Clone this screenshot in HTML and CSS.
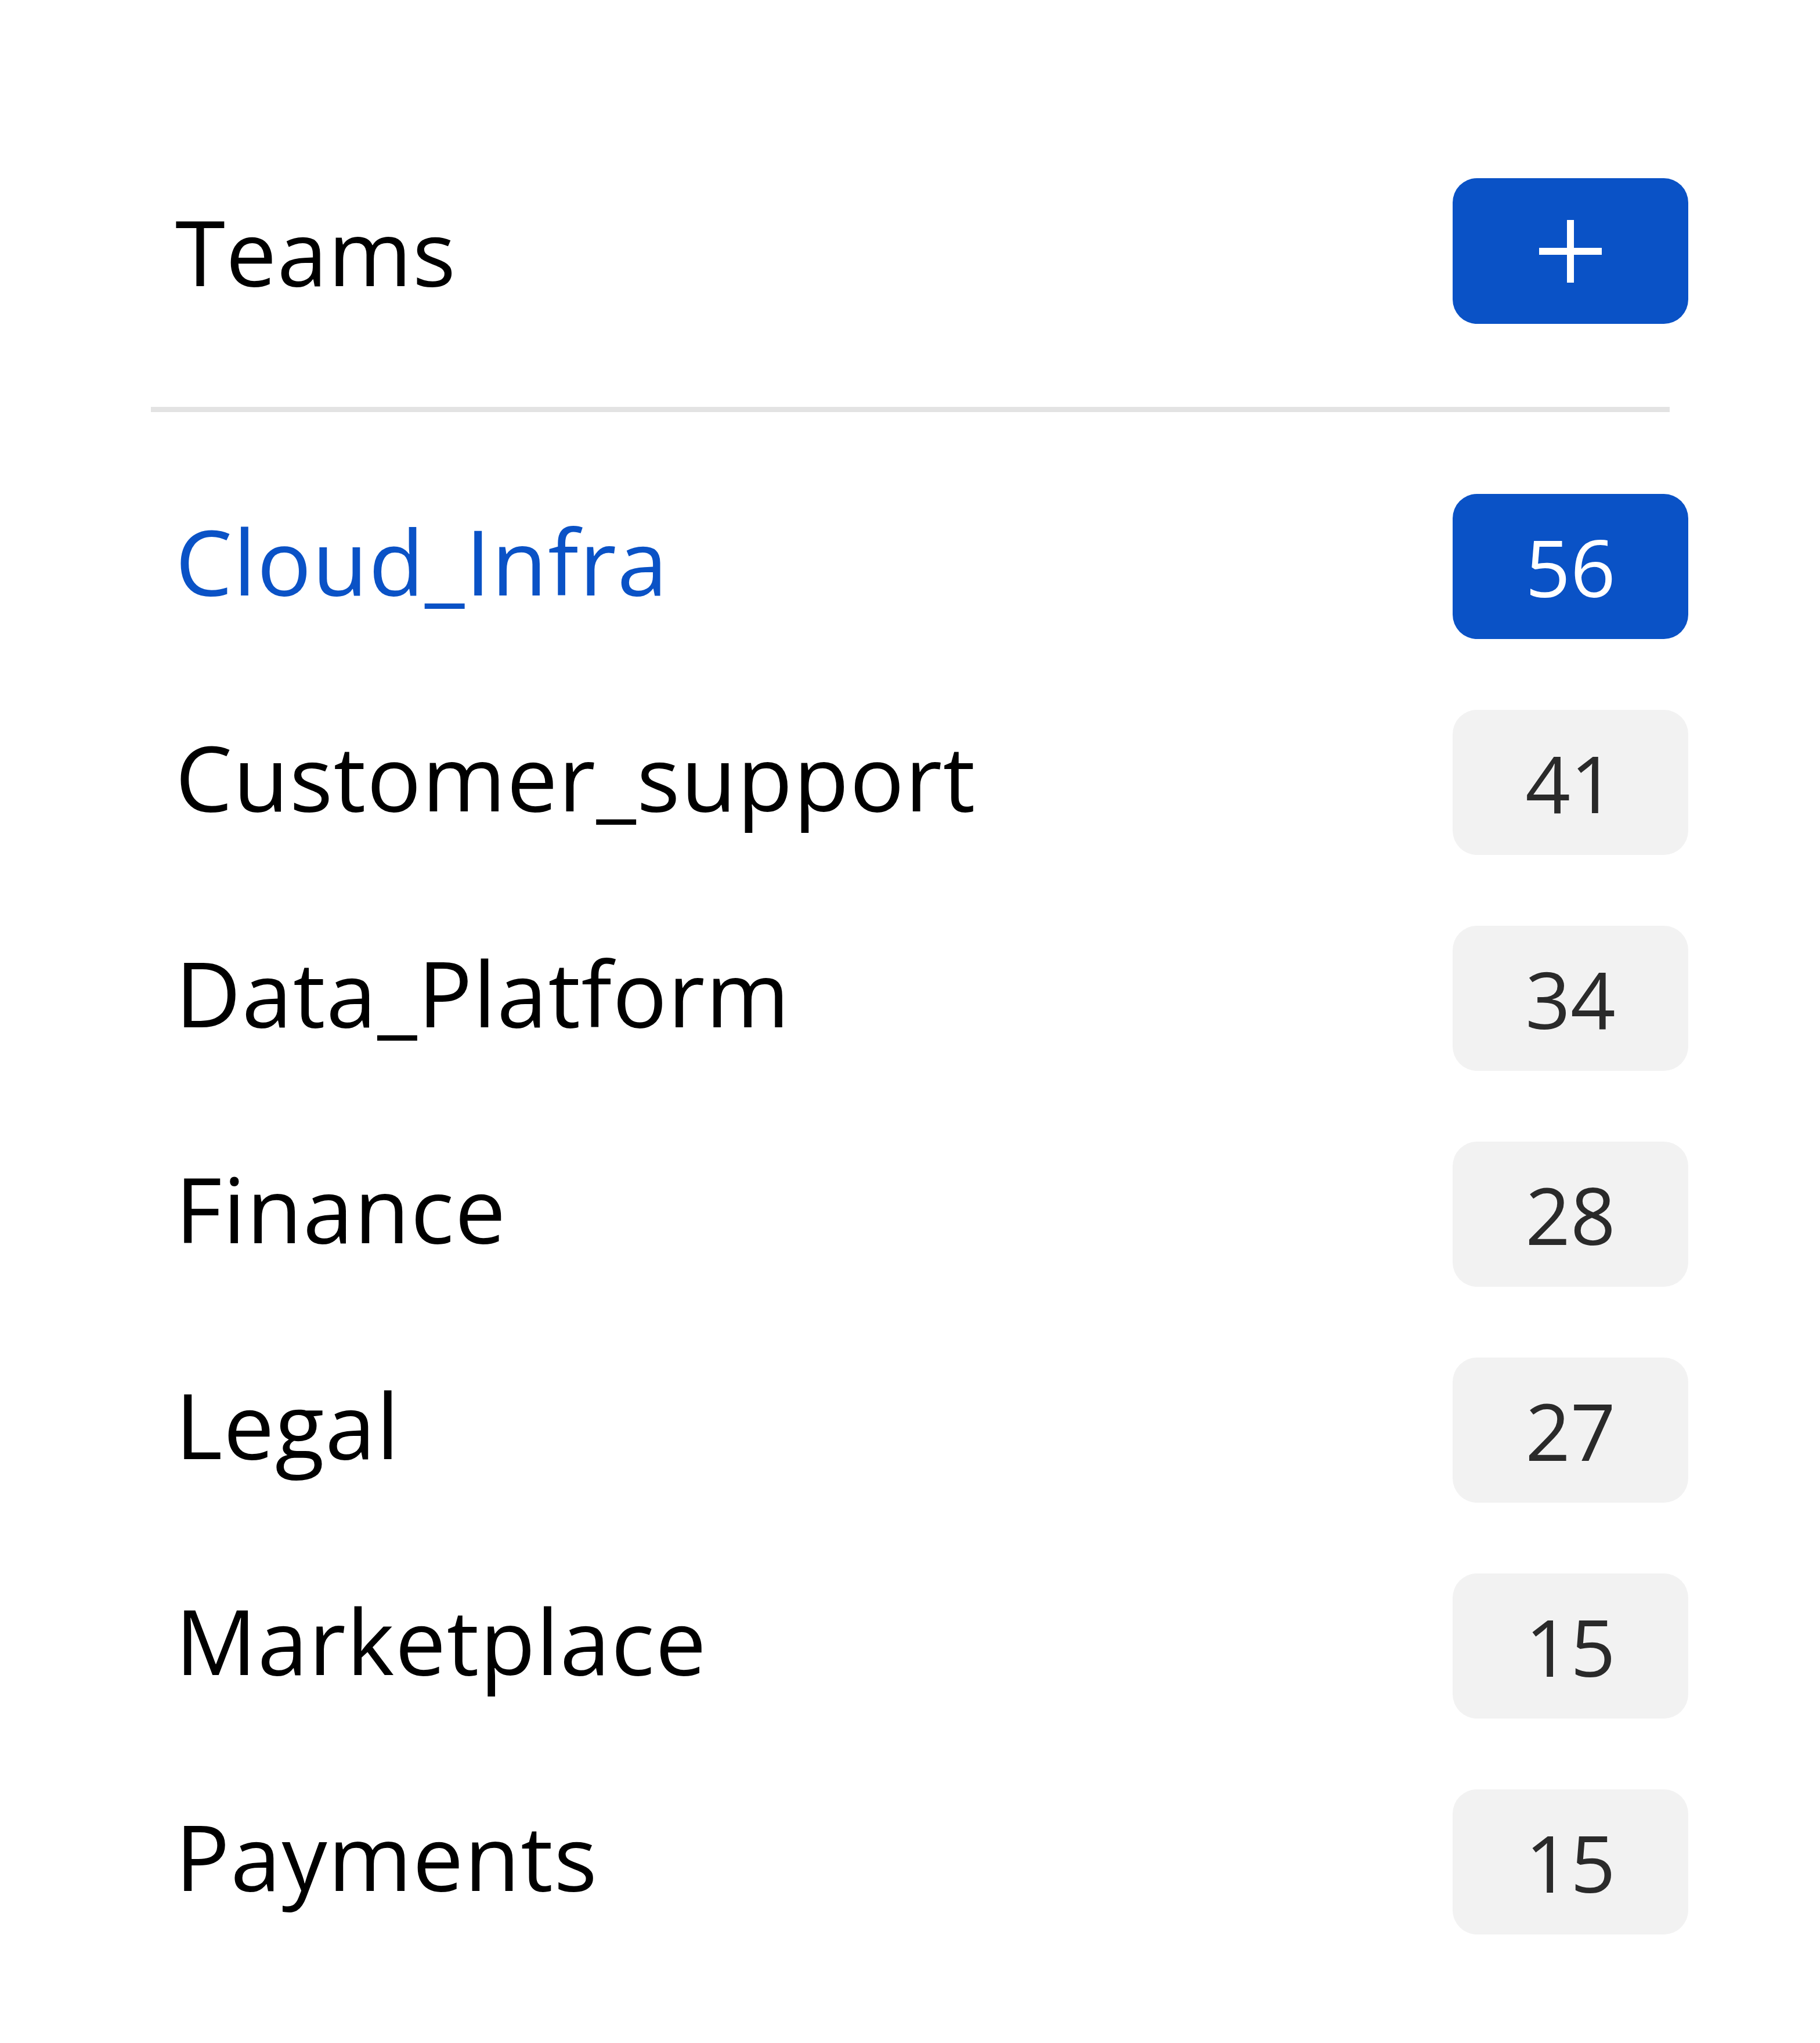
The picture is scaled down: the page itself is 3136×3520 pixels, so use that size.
FILE: index.html
```html
<!DOCTYPE html>
<html>

<head>
  <title>Teams</title>
  <link rel="stylesheet" href="styles.css">
</head>

<body>
  <div class="panel">
    <div class="panel-header">
      <h1 class="panel-title">Teams</h1>
      <button class="add-button" title="Add team">
        <svg width="108" height="108" viewBox="0 0 108 108">
          <rect x="48" y="0" width="12" height="108" fill="#fff"/>
          <rect x="0" y="48" width="108" height="12" fill="#fff"/>
        </svg>
      </button>
    </div>

    <div class="divider"></div>

    <ul class="team-list">
      <li class="team-item active">
        <span class="team-name">Cloud_Infra</span>
        <span class="team-count">56</span>
      </li>
      <li class="team-item">
        <span class="team-name">Customer_support</span>
        <span class="team-count">41</span>
      </li>
      <li class="team-item">
        <span class="team-name">Data_Platform</span>
        <span class="team-count">34</span>
      </li>
      <li class="team-item">
        <span class="team-name">Finance</span>
        <span class="team-count">28</span>
      </li>
      <li class="team-item">
        <span class="team-name">Legal</span>
        <span class="team-count">27</span>
      </li>
      <li class="team-item">
        <span class="team-name">Marketplace</span>
        <span class="team-count">15</span>
      </li>
      <li class="team-item">
        <span class="team-name">Payments</span>
        <span class="team-count">15</span>
      </li>
    </ul>
  </div>
</body>

</html>
```

FILE: styles.css
```css
body {
  font-family: "Open Sans", "Noto Sans", sans-serif;
  margin: 0;
  padding: 0;
  background-color: #fff;
  color: #000;
}

/* panel */
.panel {
  padding: 307px 227px 0 260px;
}

.panel-header {
  display: flex;
  justify-content: space-between;
  align-items: center;
  padding-left: 42px;
}

.panel-title {
  margin: 0;
  font-size: 156px;
  font-weight: 400;
  line-height: 1;
  letter-spacing: 1px;
}

.add-button {
  width: 406px;
  height: 251px;
  border: none;
  border-radius: 42px;
  background-color: #0a52c6;
  display: flex;
  align-items: center;
  justify-content: center;
  cursor: pointer;
  padding: 0;
}

.divider {
  height: 9px;
  background-color: #e3e3e3;
  margin: 143px 32px 141px 0;
}

/* team list */
.team-list {
  list-style: none;
  margin: 0;
  padding: 0 0 0 42px;
  display: flex;
  flex-direction: column;
  gap: 122px;
}

.team-item {
  display: flex;
  justify-content: space-between;
  align-items: center;
  height: 250px;
}

.team-name {
  font-size: 156px;
  line-height: 1;
  letter-spacing: 1.5px;
  padding-bottom: 20px;
}

.team-count {
  width: 406px;
  height: 250px;
  border-radius: 42px;
  background-color: #f2f2f2;
  color: #2a2a2a;
  font-size: 136px;
  display: flex;
  align-items: center;
  justify-content: center;
}

.team-item.active .team-name {
  color: #0a52c6;
}

.team-item.active .team-count {
  background-color: #0a52c6;
  color: #fff;
}
```
